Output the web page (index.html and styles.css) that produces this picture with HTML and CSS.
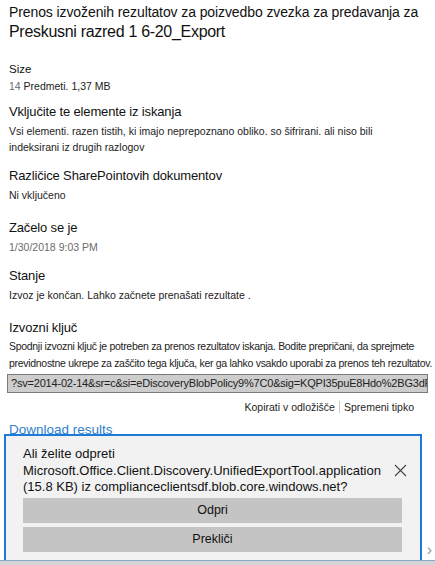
FILE: index.html
```html
<!DOCTYPE html>
<html lang="sl">
<head>
  <meta charset="UTF-8">
  <title>Prenos izvoženih rezultatov</title>
  <link rel="stylesheet" href="styles.css">
</head>
<body>
  <div class="panel">
    <h1 class="title">
      <span class="title-top">Prenos izvoženih rezultatov za poizvedbo zvezka za predavanja za</span>
      <span class="title-name">Preskusni razred 1 6-20_Export</span>
    </h1>

    <div class="field field-size">
      <div class="label small">Size</div>
      <div class="value"><span class="muted">14</span> Predmeti. 1,37 MB</div>
    </div>

    <div class="field field-near">
      <div class="label">Vključite te elemente iz iskanja</div>
      <div class="value narrow">Vsi elementi. razen tistih, ki imajo neprepoznano obliko. so šifrirani. ali niso bili indeksirani iz drugih razlogov</div>
    </div>

    <div class="field">
      <div class="label">Različice SharePointovih dokumentov</div>
      <div class="value">Ni vključeno</div>
    </div>

    <div class="field field-far">
      <div class="label">Začelo se je</div>
      <div class="value muted">1/30/2018 9:03 PM</div>
    </div>

    <div class="field">
      <div class="label">Stanje</div>
      <div class="value">Izvoz je končan. Lahko začnete prenašati rezultate .</div>
    </div>

    <div class="field field-far">
      <div class="label">Izvozni ključ</div>
      <div class="value tight">Spodnji izvozni ključ je potreben za prenos rezultatov iskanja. Bodite prepričani, da sprejmete<br>previdnostne ukrepe za zaščito tega ključa, ker ga lahko vsakdo uporabi za prenos teh rezultatov.</div>
      <div class="key-box">?sv=2014-02-14&amp;sr=c&amp;si=eDiscoveryBlobPolicy9%7C0&amp;sig=KQPI35puE8Hdo%2BG3dFk%3D</div>
      <div class="key-actions">
        <a class="action">Kopirati v odložišče</a>
        <span class="sep"></span>
        <a class="action">Spremeni tipko</a>
      </div>
    </div>

    <a class="download">Download results</a>
  </div>

  <!-- browser download prompt, sits over the page -->
  <div class="prompt">
    <div class="prompt-head">
      <p class="prompt-text">Ali želite odpreti<br>Microsoft.Office.Client.Discovery.UnifiedExportTool.application<br>(15.8 KB) iz complianceclientsdf.blob.core.windows.net?</p>
      <span class="prompt-close">
        <svg width="13" height="13" viewBox="0 0 13 13"><path d="M1 1 L12 12 M12 1 L1 12" stroke="#444" stroke-width="1.1" fill="none"/></svg>
      </span>
    </div>
    <button class="prompt-btn">Odpri</button>
    <button class="prompt-btn">Prekliči</button>
  </div>

  <div class="hscroll"><span class="arrow">&#x203A;</span></div>
</body>
</html>
```

FILE: styles.css
```css
html, body {
  margin: 0;
  height: 100%;
  overflow: hidden;
}
body {
  background: #fff;
  color: #1e1e1e;
  font-family: "Liberation Sans", Arial, sans-serif;
  position: relative;
}
.panel {
  padding: 0 9px;
}
.title {
  margin: 0;
  font-weight: normal;
  color: #111;
  white-space: nowrap;
}
.title-top {
  display: block;
  font-size: 14px;
  letter-spacing: -0.1px;
  line-height: 20px;
  padding-top: 2px;
}
.title-name {
  display: block;
  font-size: 16px;
  letter-spacing: -0.3px;
  line-height: 20px;
}
.field {
  margin-top: 11px;
}
.field-size {
  margin-top: 19px;
}
.field-near {
  margin-top: 8px;
}
.field-far {
  margin-top: 15px;
}
.label {
  font-size: 13px;
  letter-spacing: -0.15px;
  line-height: 20px;
  color: #111;
}
.label.small {
  font-size: 11.5px;
  letter-spacing: 0;
  line-height: 16px;
}
.value {
  font-size: 10.5px;
  line-height: 16px;
  color: #222;
  margin-top: 1px;
}
.value.narrow {
  max-width: 370px;
}
.value.tight {
  letter-spacing: -0.3px;
  white-space: nowrap;
  line-height: 17px;
  margin-top: 0;
}
.muted {
  color: #6b6b6b;
}
.key-box {
  margin: 2px -2px 0 -2px;
  border: 1px solid #7a7a7a;
  background: #cdcdcd;
  color: #222;
  font-size: 11px;
  letter-spacing: -0.2px;
  line-height: 17px;
  padding: 0 3px;
  white-space: nowrap;
  overflow: hidden;
}
.key-actions {
  display: flex;
  justify-content: flex-end;
  align-items: center;
  gap: 4px;
  font-size: 10.5px;
  line-height: 16px;
  margin-top: 6px;
  padding-right: 12px;
}
.sep {
  width: 1px;
  height: 12px;
  background: #c8c8c8;
}
.download {
  display: block;
  margin-top: 5px;
  color: #2f80cc;
  font-size: 13.5px;
  line-height: 20px;
}
.prompt {
  position: absolute;
  left: 4px;
  top: 434px;
  width: 380px;
  height: 126px;
  background: #f2f2f2;
  border: 2px solid #1d7ad6;
  border-bottom: none;
  padding: 0 17px;
}
.prompt-head {
  display: flex;
  align-items: center;
  justify-content: space-between;
  padding-top: 10px;
}
.prompt-text {
  margin: 0;
  font-size: 13px;
  line-height: 16.5px;
  color: #111;
}
.prompt-close {
  display: flex;
  margin-right: -4px;
}
.prompt-btn {
  display: block;
  width: 379px;
  height: 25px;
  margin: 2px 0 0 0;
  border: none;
  background: #c4c4c4;
  font-family: inherit;
  font-size: 12.5px;
  color: #111;
  padding: 0;
}
.prompt-btn + .prompt-btn {
  margin-top: 4px;
}
.hscroll {
  position: absolute;
  left: 0;
  right: 0;
  bottom: 0;
  height: 4px;
  background: #d4d4d4;
  border-top: 1px solid #8aa6c8;
}
.arrow {
  position: absolute;
  right: 3px;
  bottom: 6px;
  font-size: 16px;
  color: #9a9a9a;
}
```
